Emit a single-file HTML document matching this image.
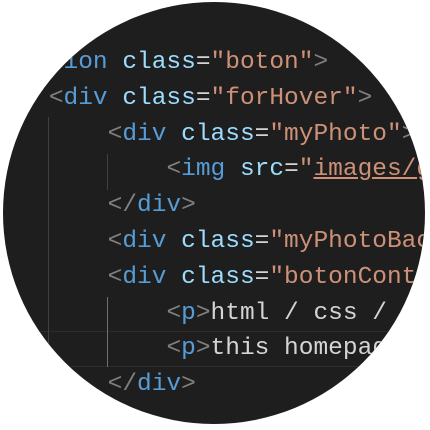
<!DOCTYPE html>
<html><head><style>
html,body{margin:0;padding:0;background:#fff;}
.c{position:absolute;left:3px;top:2px;width:422px;height:422px;border-radius:50%;background:#1e1e1e;overflow:hidden;}
.code{position:absolute;left:-13px;top:43px;font-family:"Liberation Mono",monospace;font-size:24.5px;line-height:35.8px;white-space:pre;color:#d4d4d4;}
.b{color:#808080}.t{color:#569cd6}.a{color:#9cdcfe}.s{color:#ce9178}
.u{text-decoration:underline;text-decoration-color:#ce9178;}
.g{position:absolute;width:1px;background:#404040;}
.h{position:absolute;left:0;width:422px;height:1px;background:#2c2c2c;}
</style></head><body>
<div class="c">
<div class="h" style="top:329px"></div>
<div class="h" style="top:364px"></div>
<div class="g" style="left:45px;top:115px;height:300px"></div>
<div class="g" style="left:104px;top:152px;height:36px"></div>
<div class="g" style="left:104px;top:295px;height:70px;background:#707070"></div>
<div class="code"><span class="b">&lt;</span><span class="t">section</span> <span class="a">class</span>=<span class="s">"boton"</span><span class="b">&gt;</span>
    <span class="b">&lt;</span><span class="t">div</span> <span class="a">class</span>=<span class="s">"forHover"</span><span class="b">&gt;</span>
        <span class="b">&lt;</span><span class="t">div</span> <span class="a">class</span>=<span class="s">"myPhoto"</span><span class="b">&gt;</span>
            <span class="b">&lt;</span><span class="t">img</span> <span class="a">src</span>=<span class="s">"<span class="u">images/gallery.jpg</span>"</span><span class="b">&gt;</span>
        <span class="b">&lt;/</span><span class="t">div</span><span class="b">&gt;</span>
        <span class="b">&lt;</span><span class="t">div</span> <span class="a">class</span>=<span class="s">"myPhotoBack"</span><span class="b">&gt;</span>
        <span class="b">&lt;</span><span class="t">div</span> <span class="a">class</span>=<span class="s">"botonContent"</span><span class="b">&gt;</span>
            <span class="b">&lt;</span><span class="t">p</span><span class="b">&gt;</span>html / css / js
            <span class="b">&lt;</span><span class="t">p</span><span class="b">&gt;</span>this homepage
        <span class="b">&lt;/</span><span class="t">div</span><span class="b">&gt;</span></div>
</div>
</body></html>
